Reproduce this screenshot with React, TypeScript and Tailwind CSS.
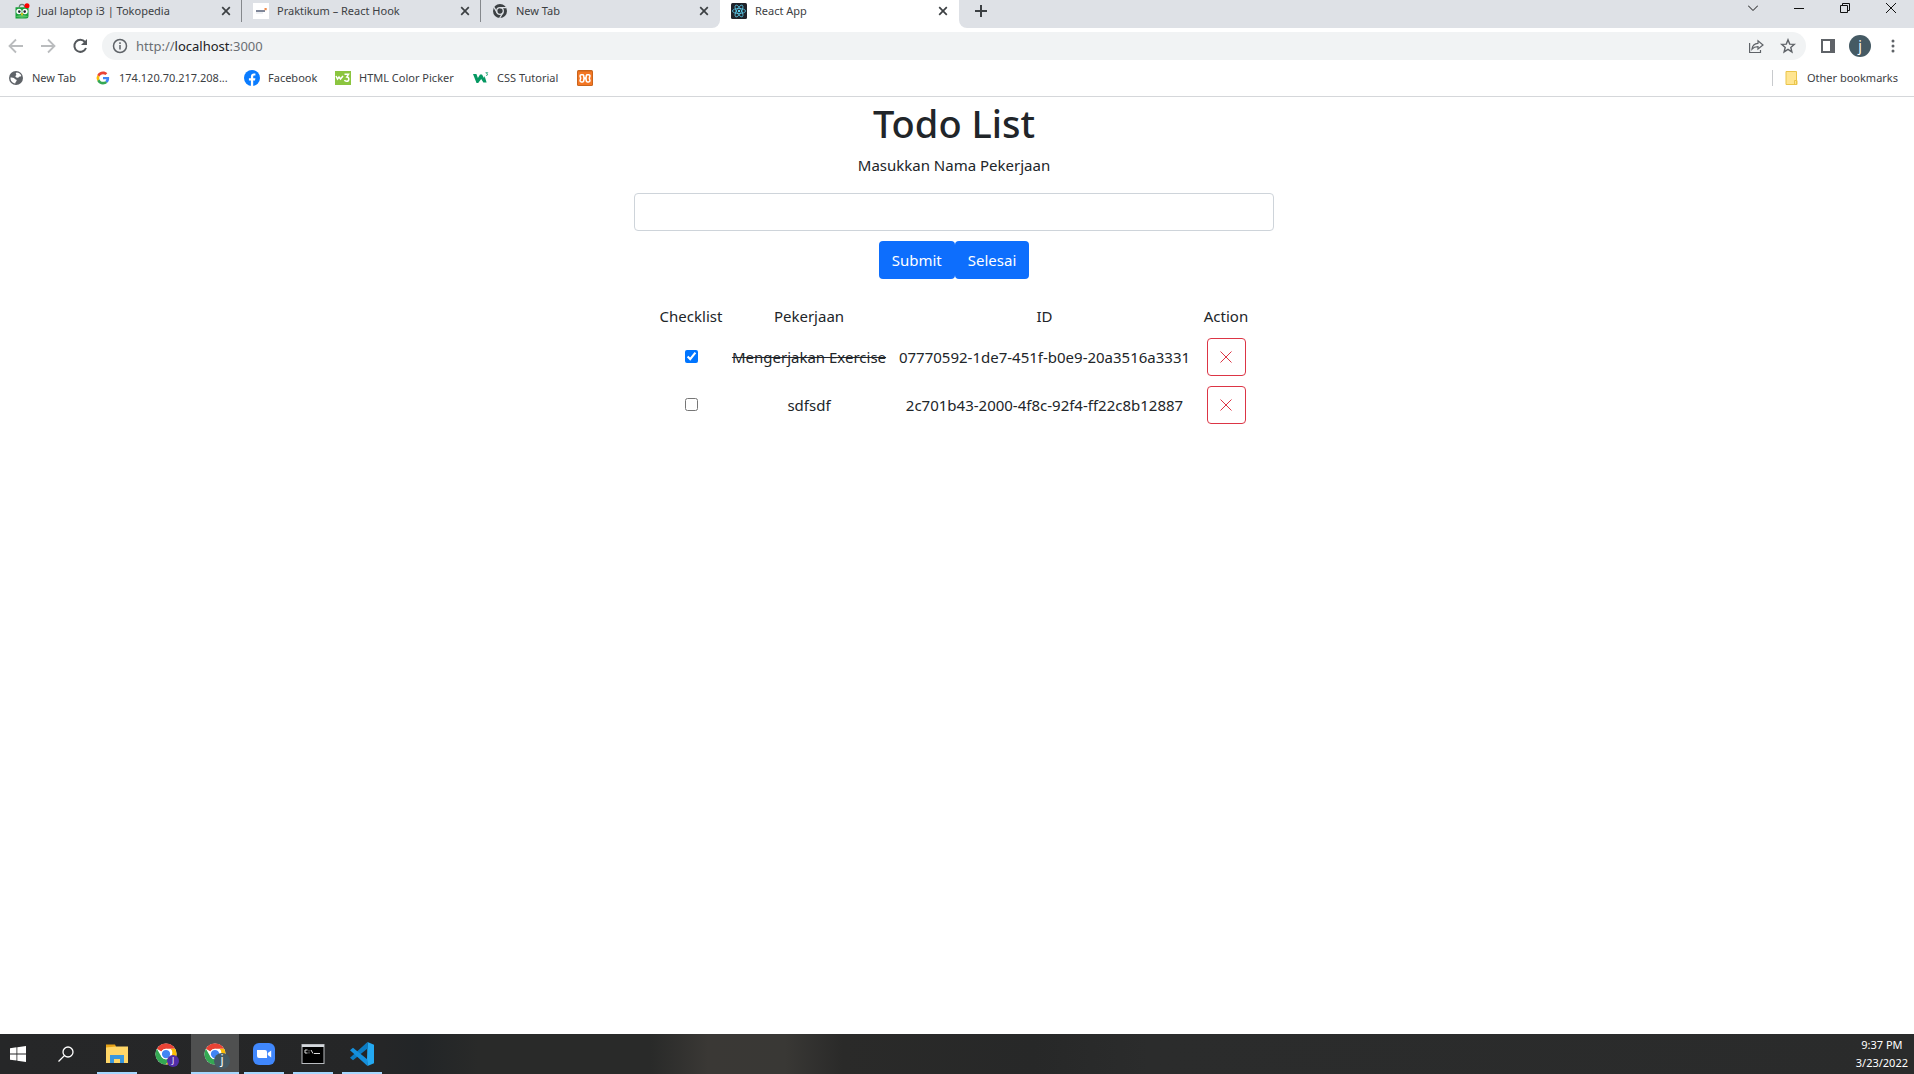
import React, { useState } from "react";

type Kind = { className?: string };

const ChromeLogo = ({ className }: Kind) => (
  <svg viewBox="0 0 48 48" className={className} aria-hidden="true">
    <circle cx="24" cy="24" r="23" fill="#fff" />
    <path d="M24 1a23 23 0 0 1 19.9 11.5H24A11.5 11.5 0 0 0 14 18.3L4.1 12.5A23 23 0 0 1 24 1z" fill="#e94335" />
    <path d="M4.1 12.5A23 23 0 0 0 24 47l9.9-17.2A11.5 11.5 0 0 1 14 29.800z" fill="#34a853" />
    <path d="M43.900 12.500A23 23 0 0 1 24 47l9.900-17.200A11.500 11.500 0 0 0 34 12.500z" fill="#fbbc04" />
    <circle cx="24" cy="24" r="11.500" fill="#fff" />
    <circle cx="24" cy="24" r="9" fill="#4285f4" />
  </svg>
);

const TokopediaIcon = () => (
  <svg viewBox="0 0 16 16" className="size-4 shrink-0" aria-hidden="true">
    <path d="M5.200 4.500a2.800 3.200 0 0 1 5.600 0" fill="none" stroke="#6f7f75" strokeWidth="1.200" />
    <path d="M1.500 4.200h13V13a2.500 2.500 0 0 1-2.500 2.500H1.500z" fill="#18a13a" />
    <path d="M2 13.500c3-2 9-2 12 0-1 1.500-11 1.500-12 0z" fill="#56c267" />
    <circle cx="5" cy="8.500" r="2.700" fill="#fff" />
    <circle cx="11" cy="8.500" r="2.700" fill="#fff" />
    <circle cx="5.300" cy="8.600" r="1.300" fill="#223" />
    <circle cx="10.700" cy="8.600" r="1.300" fill="#223" />
    <path d="M6.500 10.300h3L8 13z" fill="#f7c51e" />
    <circle cx="13" cy="2.800" r="2.500" fill="#f00" />
  </svg>
);

const PraktikumIcon = () => (
  <svg viewBox="0 0 16 16" className="size-4 shrink-0" aria-hidden="true">
    <rect width="16" height="16" fill="#fff" />
    <path d="M3 8h9" stroke="#7f8799" strokeWidth="2" />
    <path d="M3 10h7" stroke="#dcdfe5" strokeWidth="1" />
    <rect x="11.500" y="5" width="2.200" height="2.200" fill="#f08a4a" />
  </svg>
);

const ChromeGray = () => (
  <svg viewBox="0 0 16 16" className="size-4 shrink-0" aria-hidden="true">
    <circle cx="8" cy="8" r="7" fill="#3c4043" />
    <circle cx="8" cy="8" r="3.300" fill="none" stroke="#dee1e6" strokeWidth="1.300" />
    <path d="M8 4.700h6.500M5.100 9.600L2 4.200M10.900 9.600L7.700 15" stroke="#dee1e6" strokeWidth="1.300" />
  </svg>
);

const ReactIcon = () => (
  <svg viewBox="0 0 16 16" className="size-4 shrink-0" aria-hidden="true">
    <rect width="16" height="16" rx="1.500" fill="#20232a" />
    <g fill="none" stroke="#61dafb" strokeWidth=".7">
      <ellipse cx="8" cy="8" rx="6.600" ry="2.500" />
      <ellipse cx="8" cy="8" rx="6.600" ry="2.500" transform="rotate(60 8 8)" />
      <ellipse cx="8" cy="8" rx="6.600" ry="2.500" transform="rotate(120 8 8)" />
    </g>
    <circle cx="8" cy="8" r="1.200" fill="#61dafb" />
  </svg>
);

const CloseGlyph = () => (
  <svg viewBox="0 0 10 10" className="size-2.5" fill="none" stroke="#3c4043" strokeWidth="1.700" aria-hidden="true">
    <path d="M1.200 1.200l7.600 7.600M8.800 1.200L1.200 8.800" />
  </svg>
);

const GlobeIcon = () => (
  <svg viewBox="0 0 16 16" className="size-4 shrink-0" aria-hidden="true">
    <circle cx="8" cy="8" r="7" fill="#5f6368" />
    <path d="M8.500 2.500c2.500 0 4.200 1.500 4.800 3.500-1 .8-2 .2-2.600 1.200-.8 1-2.500.4-3.200-.4-.6-1 1.400-1.200.8-2.200-.4-.8-1-.9.200-2.100zM2.500 7.500c1.500.2 3.500.1 4.200 1.200.6 1 1.900.5 2 1.600.1 1.300-1.600 1.400-1.400 3.200-3-.3-5-3-4.800-6z" fill="#fff" />
  </svg>
);

const GoogleIcon = () => (
  <svg viewBox="-6 -6 60 60" className="size-4 shrink-0" aria-hidden="true">
    <path fill="#ea4335" d="M24 9.500c3.500 0 6.700 1.200 9.200 3.600l6.900-6.900C35.900 2.400 30.500 0 24 0 14.600 0 6.500 5.400 2.600 13.200l8 6.200C12.400 13.700 17.700 9.500 24 9.500z" />
    <path fill="#4285f4" d="M47 24.600c0-1.600-.2-3.100-.4-4.600H24v9h12.900c-.6 3-2.200 5.500-4.700 7.200l7.700 6C44.400 38 47 32 47 24.600z" />
    <path fill="#fbbc05" d="M10.500 28.600a14.500 14.500 0 0 1 0-9.200l-8-6.200a24 24 0 0 0 0 21.600z" />
    <path fill="#34a853" d="M24 48c6.500 0 11.900-2.100 15.900-5.800l-7.700-6c-2.200 1.500-4.900 2.300-8.200 2.300-6.300 0-11.600-4.200-13.500-9.900l-8 6.200C6.500 42.600 14.600 48 24 48z" />
  </svg>
);

const FacebookIcon = () => (
  <svg viewBox="0 0 16 16" className="size-4 shrink-0" aria-hidden="true">
    <circle cx="8" cy="8" r="8" fill="#0a7cff" />
    <path d="M6.900 16v-5.500h-2V8.200h2V6.600c0-2 1.200-3.100 3-3.100l1.500.1v2h-1c-.9 0-1.200.5-1.200 1.100v1.500h2.200l-.4 2.300H9.200V16z" fill="#fff" />
  </svg>
);

const ColorPickerIcon = () => (
  <svg viewBox="0 0 16 14" className="h-3.5 w-4 shrink-0" aria-hidden="true">
    <rect width="16" height="14" fill="#8bc53f" />
    <path d="M1 5l1.500 3L4 6l1.500 2L8 5M9.500 3.300h4L11.800 6c3 .2 2.400 4.500-.3 4.300-1 0-1.700-.4-2-1.200" fill="none" stroke="#fff" strokeWidth="1.500" />
  </svg>
);

const W3Icon = () => (
  <svg viewBox="0 0 16 16" className="size-4 shrink-0" fill="none" aria-hidden="true">
    <path d="M0 4h3.400l1.500 4L7 4.600h2L11 8l.6-2 2 6.500h-3.200L8.200 9l-3 4H3.500z" fill="#059862" />
    <path d="M12.500 2.700h2.200l-1.100 1.200c1.600.2 1.100 1.900-.6 1.500" stroke="#059862" strokeWidth=".8" />
  </svg>
);

const XamppIcon = () => (
  <svg viewBox="0 0 16 16" className="size-4 shrink-0" aria-hidden="true">
    <rect width="16" height="16" rx="1.500" fill="#c9641c" />
    <rect x="1" y="1.500" width="14" height="13.500" fill="#f37623" />
    <g fill="none" stroke="#fff" strokeWidth="1.500" strokeLinejoin="round">
      <path d="M7 8.300L6.700 5.600Q6.500 4.700 5.500 4.700H4.300Q3 4.700 3 6l.7 2.300L3 10.600q0 1.300 1.300 1.300h1.200q1 0 1.200-.9z" />
      <path d="M9 8.300l.3-2.700q.2-.9 1.200-.9h1.200Q13 4.700 13 6l-.7 2.300.7 2.300q0 1.300-1.300 1.300h-1.200q-1 0-1.200-.9z" />
      <path d="M7 8.300h2" strokeWidth="2.200" />
    </g>
  </svg>
);

const tabs = [
  { title: "Jual laptop i3 | Tokopedia", icon: <TokopediaIcon /> },
  { title: "Praktikum – React Hook", icon: <PraktikumIcon /> },
  { title: "New Tab", icon: <ChromeGray /> },
];

function TabStrip() {
  return (
    <div className="flex h-7 items-stretch bg-white text-[11px] text-[#3c4043]">
      <div className="flex shrink-0 rounded-br-lg bg-[#dee1e6] pl-[3px]">
        {tabs.map((t) => (
          <div key={t.title} className="flex w-[239px] shrink-0 items-start">
            <div className="flex h-[22px] flex-1 items-center pl-[11px]">
              {t.icon}
              <button className="ml-2 flex-1 text-left whitespace-nowrap">{t.title}</button>
              <button aria-label={"Close " + t.title} className="mr-2.5">
                <CloseGlyph />
              </button>
            </div>
            <div className={t.title === "New Tab" ? "w-px" : "h-[22px] w-px bg-[#85888c]"} />
          </div>
        ))}
      </div>
      <div className="flex w-[239px] shrink-0 items-start">
        <div className="flex h-[22px] flex-1 items-center pl-[11px]">
          <ReactIcon />
          <button className="ml-2 flex-1 text-left">React App</button>
          <button aria-label="Close React App" className="mr-[11px]">
            <CloseGlyph />
          </button>
        </div>
      </div>
      <div className="flex flex-1 items-start rounded-bl-lg bg-[#dee1e6]">
        <button aria-label="New tab" className="flex h-[22px] items-center pl-4">
          <svg viewBox="0 0 12 12" className="size-3" stroke="#3c4043" strokeWidth="2">
            <path d="M6 0v12M0 6h12" />
          </svg>
        </button>
        <div className="flex-1" />
        <div className="flex h-4 items-center gap-9 pr-[18px]">
          <button aria-label="Search tabs">
            <svg viewBox="0 0 10 10" className="size-2.5" fill="none" stroke="#111">
              <path d="M0 2.500l5 5 5-5" />
            </svg>
          </button>
          <button aria-label="Minimize">
            <svg viewBox="0 0 10 10" className="size-2.5" stroke="#111">
              <path d="M0 5.500h10" />
            </svg>
          </button>
          <button aria-label="Restore">
            <svg viewBox="0 0 10 10" className="size-2.5" fill="none" stroke="#111">
              <path d="M.5 2.500h7v7h-7zM2.500 2.500v-2h7v7h-2" />
            </svg>
          </button>
          <button aria-label="Close">
            <svg viewBox="0 0 10 10" className="size-2.5" stroke="#111">
              <path d="M0 0l10 10M10 0L0 10" />
            </svg>
          </button>
        </div>
      </div>
    </div>
  );
}

function Toolbar() {
  return (
    <div className="flex h-9 items-center bg-white">
      <div className="flex items-center gap-4 px-2">
        <button aria-label="Back">
          <svg viewBox="0 0 16 16" className="size-4" fill="none" stroke="#babcbe" strokeWidth="1.800">
            <path d="M15 8H2.500M8 1.500L1.500 8 8 14.500" />
          </svg>
        </button>
        <button aria-label="Forward">
          <svg viewBox="0 0 16 16" className="size-4" fill="none" stroke="#babcbe" strokeWidth="1.800">
            <path d="M1 8h12.500M8 1.500L14.500 8 8 14.500" />
          </svg>
        </button>
        <button aria-label="Reload">
          <svg viewBox="0 0 16 16" className="size-4" fill="none" stroke="#54585c" strokeWidth="2">
            <path d="M13 4a6 6 0 1 0 1 6" />
            <path d="M15 1v6H9z" fill="#54585c" stroke="none" />
          </svg>
        </button>
      </div>
      <div className="ml-1.5 flex h-7 flex-1 items-center rounded-full bg-[#f1f3f4] pr-2.5 pl-2.5">
        <svg viewBox="0 0 16 16" className="size-4" fill="none" stroke="#5f6368" strokeWidth="1.500" aria-hidden="true">
          <circle cx="8" cy="8" r="6.500" />
          <path d="M8 7v4.500M8 4.300v1.600" />
        </svg>
        <div className="ml-2 flex-1 text-[13px] leading-5 text-[#6b6f73]">
          http://<span className="text-[#202124]">localhost</span>:3000
        </div>
        <div className="flex items-center gap-4">
          <button aria-label="Share">
            <svg viewBox="0 0 16 16" className="size-4" fill="none" stroke="#5f6368" strokeWidth="1.200">
              <path d="M1.600 5v9.500h10.900V12M4 11c.4-3.700 2.500-5.500 6-5.700V2.700L15 7l-5 4V8.600c-2.700 0-4.500.6-6 2.400z" />
            </svg>
          </button>
          <button aria-label="Bookmark this page">
            <svg viewBox="0 0 16 16" className="size-4" fill="none" stroke="#5f6368" strokeWidth="1.400">
              <path d="M8 1.800l1.700 4.300 4.600.3-3.500 3 1.100 4.500L8 11.400l-3.900 2.500 1.100-4.500-3.500-3 4.600-.3z" />
            </svg>
          </button>
        </div>
      </div>
      <div className="flex items-center pr-[13px] pl-[15px]">
        <button aria-label="Side panel">
          <svg viewBox="0 0 14 14" className="size-3.5">
            <path d="M0 0h14v14H0zM2 2v10h7V2z" fill="#5f6368" fillRule="evenodd" />
          </svg>
        </button>
        <button aria-label="Profile" className="ml-3.5 size-[22px] rounded-full bg-[#455a64] text-sm leading-5 text-white">
          j
        </button>
        <button aria-label="Menu" className="ml-3.5">
          <svg viewBox="0 0 16 16" className="size-4" fill="#5f6368">
            <circle cx="8" cy="3" r="1.500" />
            <circle cx="8" cy="8" r="1.500" />
            <circle cx="8" cy="13" r="1.500" />
          </svg>
        </button>
      </div>
    </div>
  );
}

const bookmarks = [
  { title: "New Tab", icon: <GlobeIcon />, className: "w-[87px]" },
  { title: "174.120.70.217.208...", icon: <GoogleIcon />, className: "w-[149px]" },
  { title: "Facebook", icon: <FacebookIcon />, className: "w-[91px]" },
  { title: "HTML Color Picker", icon: <ColorPickerIcon />, className: "w-[138px]" },
  { title: "CSS Tutorial", icon: <W3Icon />, className: "w-[104px]" },
];

function BookmarkBar() {
  return (
    <nav className="flex h-[33px] items-center border-b border-[#d5d7da] bg-white pr-4 pb-1 pl-2 text-[11px] text-[#3c4043]">
      {bookmarks.map((b) => (
        <a key={b.title} href="#" className={"flex shrink-0 items-center gap-2 whitespace-nowrap " + b.className}>
          {b.icon}
          {b.title}
        </a>
      ))}
      <a href="#" aria-label="XAMPP">
        <XamppIcon />
      </a>
      <div className="flex-1" />
      <div className="h-4 w-px bg-[#c8cacd]" />
      <a href="#" className="flex items-center gap-2 pl-3">
        <svg viewBox="0 0 14 16" className="h-4 w-3.5" fill="#ffe591" stroke="#eac54b" aria-hidden="true">
          <path d="M1 1.500h10.500v13H1zM9.500 10.500h2.500v4H9.500z" />
        </svg>
        Other bookmarks
      </a>
    </nav>
  );
}

const initialTodos = [
  { id: "07770592-1de7-451f-b0e9-20a3516a3331", name: "Mengerjakan Exercise", done: true },
  { id: "2c701b43-2000-4f8c-92f4-ff22c8b12887", name: "sdfsdf", done: false },
];

const columns = [
  { title: "Checklist", className: "w-[73px]" },
  { title: "Pekerjaan", className: "w-[163px]" },
  { title: "ID", className: "w-[308px]" },
  { title: "Action", className: "w-[55px]" },
];

function TodoPage() {
  const [todos, setTodos] = useState(initialTodos);
  const toggle = (id: string) =>
    setTodos(todos.map((t) => (t.id === id ? { ...t, done: !t.done } : t)));
  return (
    <main className="flex flex-1 flex-col items-center bg-white pt-0.5 pr-1.5 text-[15px] leading-6 text-[#212529]">
      <h1 className="mb-1.5 text-[38px] leading-12 font-medium">Todo List</h1>
      <label htmlFor="job">Masukkan Nama Pekerjaan</label>
      <input
        id="job"
        type="text"
        className="mt-4 h-[38px] w-full max-w-[640px] rounded border border-[#ced4da] px-3 outline-none"
      />
      <div className="mt-2.5 flex text-white">
        <button className="h-[38px] rounded bg-[#0d6efd] px-[13px]">Submit</button>
        <button className="h-[38px] rounded bg-[#0d6efd] px-[13px]">Selesai</button>
      </div>
      <table className="mt-5 text-center">
        <thead>
          <tr>
            {columns.map((c) => (
              <th key={c.title} className={"py-[5px] font-normal " + c.className}>
                {c.title}
              </th>
            ))}
          </tr>
        </thead>
        <tbody>
          {todos.map((t) => (
            <tr key={t.id}>
              <td className="py-[5px]">
                <input
                  type="checkbox"
                  aria-label={t.name}
                  checked={t.done}
                  onChange={() => toggle(t.id)}
                  className="size-[13px]"
                />
              </td>
              <td className={t.done ? "py-[5px] line-through" : "py-[5px]"}>{t.name}</td>
              <td className="py-[5px]">{t.id}</td>
              <td className="py-[5px]">
                <button
                  aria-label={"Delete " + t.name}
                  onClick={() => setTodos(todos.filter((x) => x.id !== t.id))}
                  className="mx-auto flex h-[38px] w-[39px] items-center justify-center rounded border border-[#dc3545]"
                >
                  <svg viewBox="0 0 12 12" className="size-3" stroke="#dc3545" strokeWidth="1">
                    <path d="M.5.500l11 11M11.500.500l-11 11" />
                  </svg>
                </button>
              </td>
            </tr>
          ))}
        </tbody>
      </table>
    </main>
  );
}

const ExplorerIcon = () => (
  <svg viewBox="0 0 24 24" className="size-6" aria-hidden="true">
    <path d="M1 2.500h9l1 2V8H1z" fill="#e8a317" />
    <path d="M1 5.500l10-1h12V21H1z" fill="#ffd667" />
    <path d="M5 21v-8h14v8h-4v-4H9v4z" fill="#3a97dd" />
  </svg>
);

const ZoomIcon = () => (
  <svg viewBox="0 0 24 24" className="size-6" aria-hidden="true">
    <rect x="1" y="1" width="22" height="22" rx="6" fill="#4087fc" />
    <path d="M5 8h8a2 2 0 0 1 2 2v6H7a2 2 0 0 1-2-2zM15.800 11l3.400-2.500v7L15.800 13z" fill="#fff" />
  </svg>
);

const TerminalIcon = () => (
  <svg viewBox="0 0 24 20" className="h-5 w-6" aria-hidden="true">
    <rect x="1" y=".5" width="22" height="19" fill="#000" stroke="#b9bcc0" />
    <rect x="1" y="1" width="22" height="2" fill="#d4d8dd" />
    <path d="M6.500 6H4v3h2.500M8 6.500v.8M8 8.500v.8M10 6l2 3.500M13 9.500h6" fill="none" stroke="#ddd" />
  </svg>
);

const CodeIcon = () => (
  <svg viewBox="0 0 24 24" className="size-6" aria-hidden="true">
    <path d="M17.500 0L24 2.800V21.200L17.500 24 17 18z" fill="#24a9f2" />
    <path d="M17.500 0v6.500L3 18.200 0 15.800z" fill="#0b7cc4" />
    <path d="M17.500 24v-6.500L3 5.800 0 8.200z" fill="#1590dd" />
  </svg>
);

const BadgedChrome = ({ letter, tone }: { letter: string; tone: string }) => (
  <span className="relative block size-[22px]">
    <ChromeLogo className="size-[22px]" />
    <span className={"absolute rounded-full text-center text-white " + tone}>{letter}</span>
  </span>
);

const apps = [
  { name: "File Explorer", icon: <ExplorerIcon />, open: true, active: false },
  {
    name: "Chrome profile J",
    icon: <BadgedChrome letter="J" tone="-right-0.5 -bottom-0.5 size-3 bg-[#512da8] text-[8px] leading-3" />,
    open: false,
    active: false,
  },
  {
    name: "Chrome profile j",
    icon: <BadgedChrome letter="j" tone="-right-1 -bottom-1 size-4 bg-[#455a64] text-xs leading-3.5" />,
    open: true,
    active: true,
  },
  { name: "Zoom", icon: <ZoomIcon />, open: true, active: false },
  { name: "Command Prompt", icon: <TerminalIcon />, open: true, active: false },
  { name: "Visual Studio Code", icon: <CodeIcon />, open: true, active: false },
];

function Taskbar() {
  return (
    <footer className="flex h-10 items-stretch bg-[linear-gradient(to_right,#262728_0%,#252627_20%,#222527_22%,#292a29_25%,#292a29_34%,#3a3835_37%,#393835_41%,#2a2a29_44%,#272828_54%,#2b2c2c_60%,#2a2b2b_100%)] text-white">
      <button aria-label="Start" className="flex w-9 items-center justify-center">
        <svg viewBox="0 0 16 16" className="size-4" fill="#fff">
          <path d="M0 2.200L6.500 1.300v6.200H0zM7.300 1.200L16 0v7.500H7.300zM0 8.400h6.500v6.200L0 13.700zM7.300 8.400H16V16l-8.700-1.200z" />
        </svg>
      </button>
      <button aria-label="Search" className="ml-1.5 flex w-12 items-center justify-center">
        <svg viewBox="0 0 16 16" className="size-4" fill="none" stroke="#fff" strokeWidth="1.300">
          <circle cx="10" cy="6" r="5" />
          <path d="M6.400 9.600L.5 15.500" />
        </svg>
      </button>
      <div className="ml-[3px] flex gap-px">
        {apps.map((a) => (
          <button
            key={a.name}
            aria-label={a.name}
            className={
              a.active
                ? "flex w-12 flex-col items-center bg-[#4f5050]"
                : "flex w-12 flex-col items-center"
            }
          >
            <span className="flex h-[38px] items-center pt-0.5">{a.icon}</span>
            {a.open && <span className={a.active ? "h-0.5 w-12 bg-[#a6d8ff]" : "h-0.5 w-10 bg-[#a6d8ff]"} />}
          </button>
        ))}
      </div>
      <div className="ml-auto flex flex-col items-center justify-center pr-1.5 text-[11px] leading-[18px]">
        <time>9:37 PM</time>
        <span>3/23/2022</span>
      </div>
    </footer>
  );
}

export default function App() {
  return (
    <div className="flex min-h-screen flex-col bg-white font-['Noto_Sans',sans-serif]">
      <header>
        <TabStrip />
        <Toolbar />
        <BookmarkBar />
      </header>
      <TodoPage />
      <Taskbar />
    </div>
  );
}
